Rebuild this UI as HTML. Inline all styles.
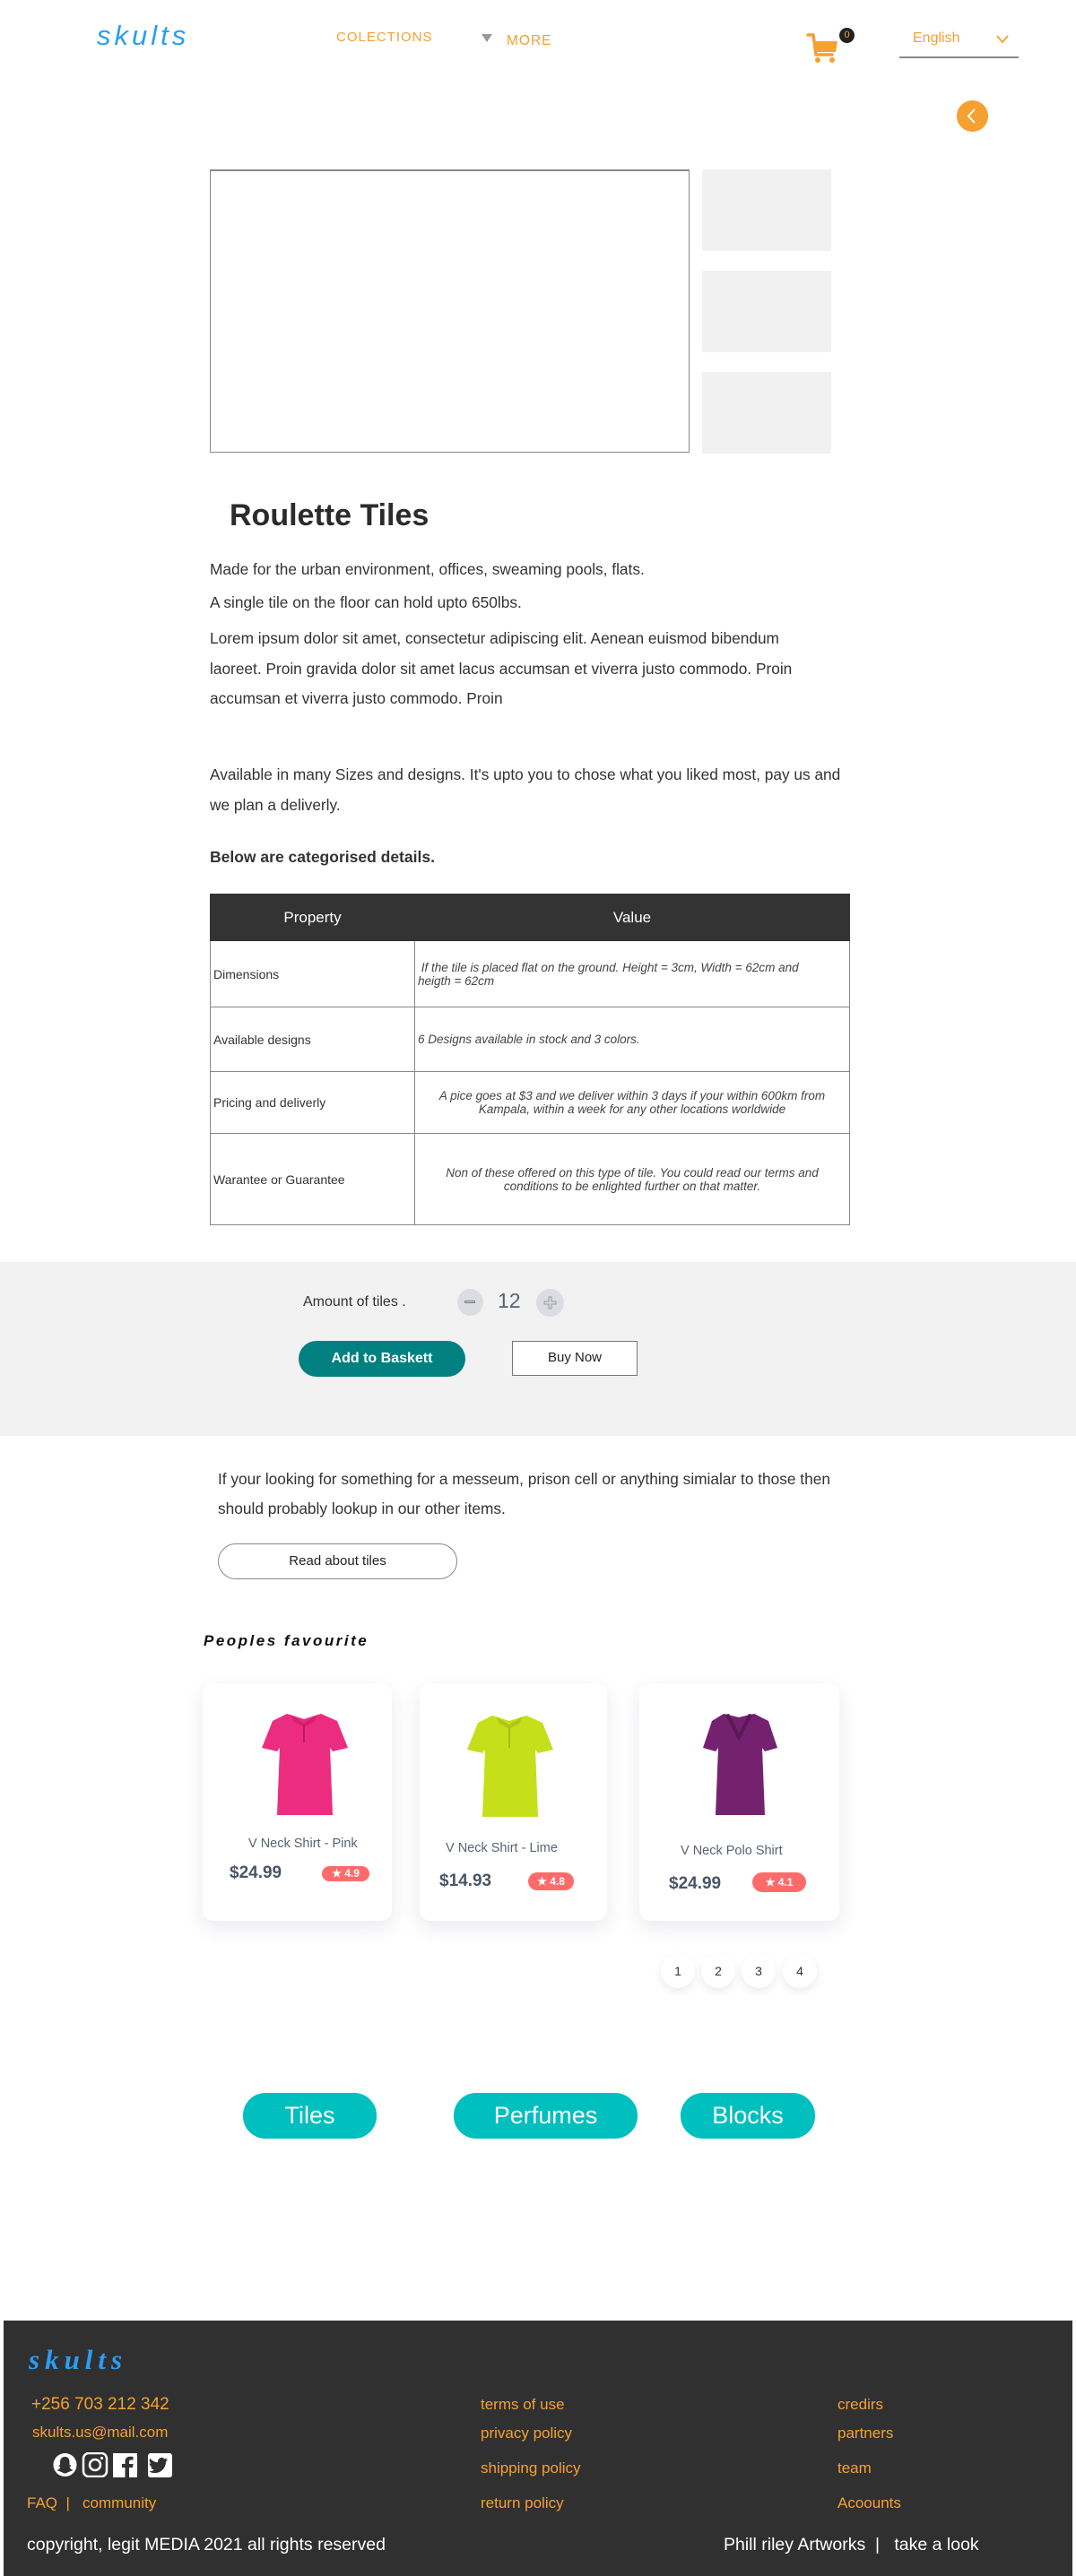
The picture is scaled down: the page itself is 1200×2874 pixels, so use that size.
<!DOCTYPE html>
<html><head><meta charset="utf-8"><style>
*{margin:0;padding:0;box-sizing:border-box}
body{width:1200px;height:2874px;position:relative;background:#fff;font-family:"Liberation Sans",sans-serif;color:#333;overflow:hidden}
.a{position:absolute;white-space:nowrap}
.or{color:#f5a030}
.p{font-size:17.3px;color:#333}
table{position:absolute;left:234px;top:997px;width:714px;border-collapse:collapse;font-size:14px}
td,th{border:1.5px solid #888;padding:0 3px}
th{background:#333;color:#fff;font-weight:normal;font-size:17px;height:52px;border-color:#333}
td.v{font-style:italic;font-size:13.5px;color:#444}
.card{position:absolute;background:#fff;border-radius:12px;box-shadow:0 8px 22px rgba(40,50,90,.10)}
.nm{position:absolute;font-size:14.5px;color:#5a6270;white-space:nowrap}
.pr{position:absolute;font-size:19px;font-weight:bold;color:#4a5568}
.bd{position:absolute;background:#ff6b6b;color:#fff;font-size:12px;font-weight:bold;border-radius:9px;height:17px;line-height:17px;text-align:center}
.pg{position:absolute;top:2180px;width:38px;height:38px;border-radius:50%;background:#fff;box-shadow:0 4px 10px rgba(0,0,0,.08);text-align:center;line-height:38px;font-size:14px;color:#333}
.pill{position:absolute;top:2335px;height:51px;border-radius:25px;background:#00bfbf;color:#fff;font-size:27px;text-align:center;line-height:51px}
.fl{position:absolute;color:#f5a030;font-size:17px;white-space:nowrap}
</style></head><body>
<div class="a" style="left:108px;top:22px;font-size:31px;color:#2a9df4;letter-spacing:4px;font-style:italic;font-weight:300">skults</div>
<div class="a or" style="left:375px;top:33px;font-size:15px;letter-spacing:1px">COLECTIONS</div>
<div class="a" style="left:537px;top:38px;width:0;height:0;border-left:6px solid transparent;border-right:6px solid transparent;border-top:9px solid #999"></div>
<div class="a or" style="left:565px;top:37px;font-size:15.5px;letter-spacing:1px">MORE</div>
<svg class="a" style="left:899px;top:36px" width="40" height="36" viewBox="0 0 40 36"><path d="M2 3h6l3 22h18" stroke="#f5a030" stroke-width="3.5" fill="none" stroke-linecap="round"/><path d="M9 10h26l-2 12H11z" fill="#f5a030"/><circle cx="13" cy="31" r="3" fill="#f5a030"/><circle cx="29" cy="31" r="3" fill="#f5a030"/></svg>
<div class="a" style="left:936px;top:31px;width:17px;height:17px;border-radius:50%;background:#222;color:#f5a030;font-size:11px;text-align:center;line-height:17px">0</div>
<div class="a or" style="left:1018px;top:34px;font-size:16px">English</div>
<svg class="a" style="left:1111px;top:39px" width="14" height="10"><path d="M1 1l6 7 6-7" stroke="#f5a030" stroke-width="1.8" fill="none"/></svg>
<div class="a" style="left:1003px;top:63px;width:133px;height:2px;background:#888"></div>
<div class="a" style="left:1067px;top:112px;width:35px;height:35px;border-radius:50%;background:#f5a030"></div>
<svg class="a" style="left:1067px;top:112px" width="35" height="35"><path d="M20 10l-7 7.5 7 7.5" stroke="#fff" stroke-width="2" fill="none"/></svg>
<div class="a" style="left:234px;top:189px;width:535px;height:316px;border:1.5px solid #888;border-top-width:2px"></div>
<div class="a" style="left:783px;top:189px;width:144px;height:91px;background:#f1f1f1"></div>
<div class="a" style="left:783px;top:302px;width:144px;height:91px;background:#f1f1f1"></div>
<div class="a" style="left:783px;top:415px;width:144px;height:91px;background:#f1f1f1"></div>
<div class="a" style="left:256px;top:556px;font-size:34px;font-weight:bold;color:#2b2b2b">Roulette Tiles</div>
<div class="a p" style="left:234px;top:625px">Made for the urban environment, offices, sweaming pools, flats.</div>
<div class="a p" style="left:234px;top:662px">A single tile on the floor can hold upto 650lbs.</div>
<div class="a p" style="left:234px;top:696px;line-height:33.5px">Lorem ipsum dolor sit amet, consectetur adipiscing elit. Aenean euismod bibendum<br>laoreet. Proin gravida dolor sit amet lacus accumsan et viverra justo commodo. Proin<br>accumsan et viverra justo commodo. Proin</div>
<div class="a p" style="left:234px;top:847px;line-height:34px">Available in many Sizes and designs. It's upto you to chose what you liked most, pay us and<br>we plan a deliverly.</div>
<div class="a" style="left:234px;top:946px;font-size:17.5px;font-weight:bold;color:#333">Below are categorised details.</div>
<table>
<tr><th style="width:228px">Property</th><th>Value</th></tr>
<tr style="height:74px"><td>Dimensions</td><td class="v">&nbsp;If the tile is placed flat on the ground. Height = 3cm, Width = 62cm and<br>heigth = 62cm</td></tr>
<tr style="height:72px"><td>Available designs</td><td class="v">6 Designs available in stock and 3 colors.</td></tr>
<tr style="height:69px"><td>Pricing and deliverly</td><td class="v" style="text-align:center">A pice goes at $3 and we deliver within 3 days if your within 600km from<br>Kampala, within a week for any other locations worldwide</td></tr>
<tr style="height:102px"><td>Warantee or Guarantee</td><td class="v" style="text-align:center">Non of these offered on this type of tile. You could read our terms and<br>conditions to be enlighted further on that matter.</td></tr>
</table>
<div class="a" style="left:0;top:1408px;width:1200px;height:194px;background:#f2f2f2"></div>
<div class="a" style="left:338px;top:1444px;font-size:16px;color:#333">Amount of tiles .</div>
<div class="a" style="left:510px;top:1438px;width:29px;height:30px;border-radius:50%;background:#dcdde2"></div>
<div class="a" style="left:518px;top:1451px;width:12px;height:3px;border:1px solid #777;border-radius:1px"></div>
<div class="a" style="left:555px;top:1438px;font-size:23px;color:#5a6270">12</div>
<div class="a" style="left:598px;top:1438px;width:31px;height:31px;border-radius:50%;background:#dcdde2"></div>
<svg class="a" style="left:605px;top:1445px" width="17" height="17"><path d="M7 2h3v5h5v3h-5v5H7v-5H2V7h5z" fill="none" stroke="#999" stroke-width="1"/></svg>
<div class="a" style="left:333px;top:1496px;width:186px;height:40px;border-radius:20px;background:#008080;color:#fff;font-weight:bold;font-size:16px;text-align:center;line-height:40px">Add to Baskett</div>
<div class="a" style="left:571px;top:1496px;width:140px;height:39px;border:1.5px solid #777;background:#fff;font-size:15px;text-align:center;line-height:36px;color:#222">Buy Now</div>
<div class="a p" style="left:243px;top:1640px">If your looking for something for a messeum, prison cell or anything simialar to those then</div>
<div class="a p" style="left:243px;top:1673px">should probably lookup in our other items.</div>
<div class="a" style="left:243px;top:1722px;width:267px;height:40px;border:1.5px solid #888;border-radius:20px;text-align:center;line-height:37px;font-size:15px;color:#222">Read about tiles</div>
<div class="a" style="left:227px;top:1821px;font-size:17px;font-weight:bold;font-style:italic;letter-spacing:2.5px;color:#111">Peoples favourite</div>
<div class="card" style="left:226px;top:1878px;width:211px;height:265px"></div>
<div class="card" style="left:468px;top:1878px;width:209px;height:265px"></div>
<div class="card" style="left:713px;top:1878px;width:223px;height:265px"></div>
<svg class="a" style="left:290px;top:1910px" width="98" height="116" viewBox="0 0 98 116"><path d="M30 2l19 6 19-6 18 8 12 30-17 4-3-4 3 75H19l3-75-3 4-17-4 12-30z" fill="#ec2d7f"/><path d="M34 3l15 9 15-9-4 8-11 6-11-6z" fill="#d81f6e"/><rect x="48" y="14" width="2" height="20" fill="#b91a5d"/></svg>
<svg class="a" style="left:519px;top:1912px" width="98" height="116" viewBox="0 0 98 116"><path d="M30 2l19 6 19-6 18 8 12 30-17 4-3-4 3 75H19l3-75-3 4-17-4 12-30z" fill="#c5e01a"/><path d="M34 3l15 9 15-9-4 8-11 6-11-6z" fill="#aec814"/><rect x="48" y="14" width="2" height="24" fill="#a8c010"/></svg>
<svg class="a" style="left:781px;top:1910px" width="86" height="116" viewBox="0 0 86 116"><path d="M26 2l17 4 17-4 16 8 10 30-14 4-3-4 3 75H17l3-75-3 4-14-4 10-30z" fill="#74226f"/><path d="M28 3l15 30 15-30-4-1-11 22-11-22z" fill="#5a1856"/></svg>
<div class="nm" style="left:277px;top:2049px">V Neck Shirt - Pink</div>
<div class="nm" style="left:497px;top:2054px">V Neck Shirt - Lime</div>
<div class="nm" style="left:759px;top:2057px">V Neck Polo Shirt</div>
<div class="pr" style="left:256px;top:2079px">$24.99</div>
<div class="pr" style="left:490px;top:2088px">$14.93</div>
<div class="pr" style="left:746px;top:2091px">$24.99</div>
<div class="bd" style="left:359px;top:2082px;width:53px">★ 4.9</div>
<div class="bd" style="left:589px;top:2089px;width:51px;height:20px;line-height:20px;border-radius:10px">★ 4.8</div>
<div class="bd" style="left:839px;top:2089px;width:60px;height:22px;line-height:22px;border-radius:11px">★ 4.1</div>
<div class="pg" style="left:737px">1</div>
<div class="pg" style="left:782px">2</div>
<div class="pg" style="left:827px">3</div>
<div class="pg" style="left:873px">4</div>
<div class="pill" style="left:271px;width:149px">Tiles</div>
<div class="pill" style="left:506px;width:205px">Perfumes</div>
<div class="pill" style="left:759px;width:150px">Blocks</div>
<div class="a" style="left:4px;top:2589px;width:1192px;height:285px;background:#303030"></div>
<div class="a" style="left:32px;top:2615px;font-family:'Liberation Serif',serif;font-size:31px;font-weight:bold;font-style:italic;letter-spacing:6px;color:#2a9df4">skults</div>
<div class="fl" style="left:35px;top:2672px;font-size:19px">+256 703 212 342</div>
<div class="fl" style="left:36px;top:2704px">skults.us@mail.com</div>
<svg class="a" style="left:59px;top:2736px" width="134" height="28" viewBox="0 0 134 28"><circle cx="13.5" cy="14" r="13" fill="#fff"/><path d="M13.5 5c4 0 5 3 5 6v3l2 1-2 1.5c1 2 2.5 3 4 3.5-1 1-3 .5-3.5 1.5-2 0-3 2-5.5 2s-3.5-2-5.5-2c-.5-1-2.5-.5-3.5-1.5 1.5-.5 3-1.5 4-3.5L6 15l2-1v-3c0-3 1.5-6 5.5-6z" fill="#303030"/><rect x="34" y="1" width="26" height="26" rx="6" fill="none" stroke="#fff" stroke-width="2.5"/><circle cx="47" cy="14" r="6" fill="none" stroke="#fff" stroke-width="2.5"/><circle cx="54.5" cy="6.5" r="1.6" fill="#fff"/><rect x="67" y="1" width="27" height="27" fill="#fff"/><path d="M85 28V17h4l.6-4H85v-2.5c0-1.2.4-2 2-2h2.5V5c-.5 0-2-.2-3.5-.2-3.4 0-5.5 2-5.5 5.7V13h-3.5v4H80.5v11z" fill="#303030"/><rect x="106" y="1" width="27" height="27" rx="3" fill="#fff"/><path d="M128 8c-.8.4-1.6.6-2.5.7.9-.6 1.6-1.4 1.9-2.4-.8.5-1.8.9-2.8 1.1a4.3 4.3 0 0 0-7.4 3.9c-3.6-.2-6.8-1.9-8.9-4.5-1.2 2-.6 4.5 1.3 5.8-.7 0-1.4-.2-2-.5 0 2.1 1.5 3.9 3.5 4.3-.6.2-1.3.2-2 .1.6 1.7 2.2 3 4 3A8.7 8.7 0 0 1 107 21.2c1.9 1.2 4.2 1.9 6.6 1.9 8 0 12.5-6.7 12.4-12.6.9-.6 1.6-1.4 2-2.4z" fill="#303030"/></svg>
<div class="fl" style="left:30px;top:2783px">FAQ &nbsp;| &nbsp; community</div>
<div class="a" style="left:30px;top:2828px;color:#fff;font-size:19.5px">copyright, legit MEDIA 2021 all rights reserved</div>
<div class="fl" style="left:536px;top:2673px">terms of use</div>
<div class="fl" style="left:536px;top:2705px">privacy policy</div>
<div class="fl" style="left:536px;top:2744px">shipping policy</div>
<div class="fl" style="left:536px;top:2783px">return policy</div>
<div class="fl" style="left:934px;top:2673px">credirs</div>
<div class="fl" style="left:934px;top:2705px">partners</div>
<div class="fl" style="left:934px;top:2744px">team</div>
<div class="fl" style="left:934px;top:2783px">Acoounts</div>
<div class="a" style="left:807px;top:2828px;color:#fff;font-size:19.5px">Phill riley Artworks &nbsp;| &nbsp; take a look</div>
</body></html>
